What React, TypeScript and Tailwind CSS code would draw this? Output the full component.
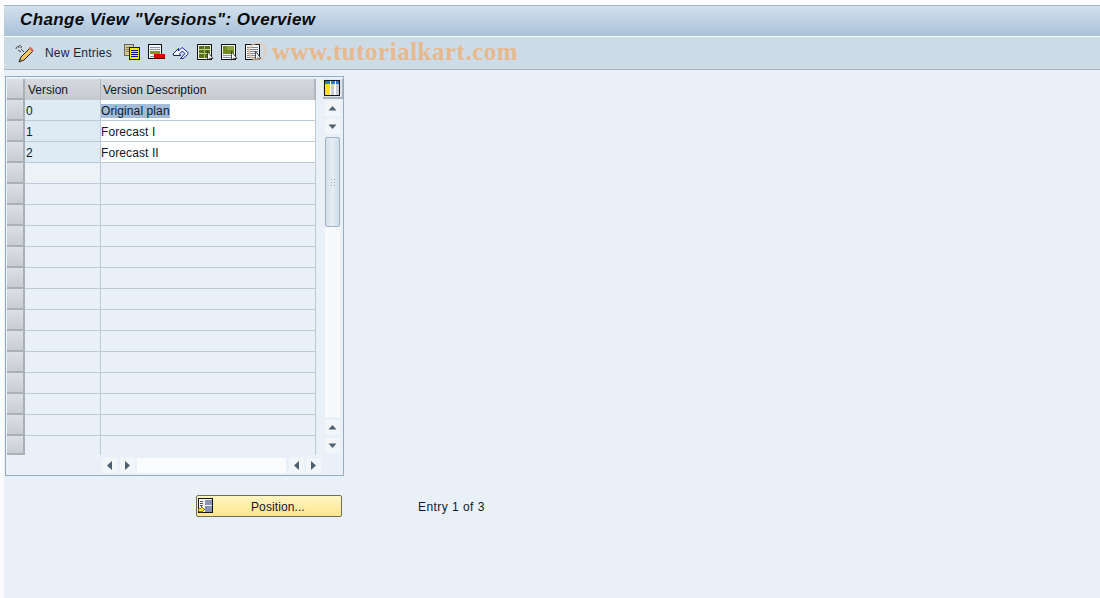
import React from 'react';

const FONT = "font-['Liberation_Sans',Arial,sans-serif]";
const ROW_COUNT = 17;
const ROWS = [
  { version: '0', text: 'Original plan' },
  { version: '1', text: 'Forecast I' },
  { version: '2', text: 'Forecast II' },
];

const Frame: React.FC<{ children: React.ReactNode }> = ({ children }) => (
  <svg width="16" height="17" viewBox="0 0 16 17" className="overflow-visible">
    <rect x="0.5" y="0.5" width="14" height="15" fill="#f4f6f8" stroke="#111" shapeRendering="crispEdges" />
    {children}
  </svg>
);

const PencilIcon = () => (
  <svg width="19" height="19" viewBox="0 0 19 19">
    <path d="M6 13l-2 5 5-2L18 7l-3-3z" fill="#f6c75a" stroke="#222" strokeWidth="1" strokeLinejoin="round" />
    <path d="M14.5 3.5l3.5 3.5" stroke="#e0605a" strokeWidth="2.4" />
    <path d="M4 17l1-2 1 1z" fill="#222" />
    <path d="M1 5c0-3 3-3 3-1M3 3c1-2 4-2 3 1M3 6l3 2M6 5l3 3" fill="none" stroke="#444" strokeWidth="1" />
  </svg>
);

const CopyIcon = () => (
  <svg width="16" height="16" viewBox="0 0 16 16" shapeRendering="crispEdges">
    <rect x="0.5" y="0.5" width="9" height="11" fill="#d8c98a" stroke="#666" />
    <path d="M2 3h6M2 5h6M2 7h6" stroke="#777" />
    <rect x="5.5" y="3.5" width="10" height="12" fill="#ffe600" stroke="#00108a" />
    <path d="M7 6h7M7 8h7M7 10h7M7 12h7" stroke="#00108a" />
  </svg>
);

const DeleteIcon = () => (
  <svg width="16" height="16" viewBox="0 0 16 16" className="overflow-visible" shapeRendering="crispEdges">
    <rect x="0.5" y="0.5" width="13" height="14" fill="#f4f6f8" stroke="#111" />
    <path d="M2 3h10M2 5h10" stroke="#8a93b5" />
    <rect x="2" y="7" width="10" height="3" fill="#7f9a2a" />
    <path d="M2 12h4" stroke="#8a93b5" />
    <rect x="6" y="10" width="11" height="4" fill="#e00000" />
    <path d="M6 14h11" stroke="#500" />
  </svg>
);

const UndoIcon = () => (
  <svg width="17" height="16" viewBox="0 0 17 16">
    <path
      d="M1 10l5.5-5.5v2.5L10 3.5l5.5 4.5c1 1 .5 2-.2 2.7L11 14.5H8.5l4.5-5-2.8-2.5-2.7 2.8 1 1.7H1.5z"
      fill="#fbfcff"
      stroke="#1020a0"
      strokeWidth="1"
      strokeLinejoin="round"
    />
  </svg>
);

const Cursor = () => <path d="M10.5 7.5v8.5l2-1.8 3.5.3z" fill="#fff" stroke="#111" strokeWidth="0.7" />;

const SelectAllIcon = () => (
  <Frame>
    <rect x="2" y="2" width="11" height="12" fill="#56701c" />
    <path d="M2 5.5h11M2 9.5h11" stroke="#c8d890" />
    <path d="M7.5 2v12" stroke="#a4ba5c" />
    <Cursor />
  </Frame>
);

const SelectBlockIcon = () => (
  <Frame>
    <rect x="2" y="2" width="11" height="8" fill="#6f8a1c" />
    <rect x="6" y="2" width="7" height="4" fill="#8fa63a" />
    <path d="M2 11.5h11M2 13.5h11" stroke="#8a93b5" />
    <Cursor />
  </Frame>
);

const DeselectIcon = () => (
  <Frame>
    <path d="M2 3.5h11M2 5.5h11M2 7.5h11M2 9.5h11M2 11.5h11M2 13.5h11" stroke="#7c8498" />
    <Cursor />
  </Frame>
);

const ConfigIcon = () => (
  <svg width="16" height="16" viewBox="0 0 16 16" shapeRendering="crispEdges">
    <rect x="0.5" y="0.5" width="15" height="15" fill="#fff" stroke="#111" />
    <rect x="1" y="1" width="14" height="3" fill="#2a78c8" />
    <path d="M6 1v3M11 1v3" stroke="#fff" />
    <rect x="1" y="4" width="5" height="11" fill="#ffe600" />
    <rect x="7" y="4" width="3" height="11" fill="#c8ccd4" />
    <rect x="12" y="4" width="3" height="11" fill="#c8ccd4" />
  </svg>
);

const PositionIcon = () => (
  <svg width="16" height="16" viewBox="0 0 16 16" shapeRendering="crispEdges">
    <rect x="0.5" y="0.5" width="14" height="14" fill="#f4f6f8" stroke="#111" />
    <rect x="7" y="2" width="7" height="5" fill="#8a93b5" />
    <rect x="7" y="8" width="7" height="6" fill="#8a93b5" />
    <path d="M2 3h3M2 5h3M2 7h3" stroke="#555" />
    <path d="M0 10h3V8l4 3.5L3 15v-2H0z" fill="#ffe600" stroke="#333" strokeWidth="0.6" />
  </svg>
);

const ScrollBtn: React.FC<{ dir: 'up' | 'down' | 'left' | 'right' }> = ({ dir }) => {
  const points = {
    up: '3.5,9.5 11.5,9.5 7.5,5',
    down: '3.5,5.5 11.5,5.5 7.5,10',
    left: '10,3 10,12 5,7.5',
    right: '5,3 5,12 10,7.5',
  }[dir];
  return (
    <div className="w-[15px] h-[15px] bg-[#f3f6f9] shrink-0">
      <svg width="15" height="15" viewBox="0 0 15 15">
        <polygon points={points} fill="#4c5f6e" />
      </svg>
    </div>
  );
};

const RowHandle: React.FC<{ last?: boolean }> = ({ last }) => (
  <div
    className={`w-[18px] shrink-0 border-r-2 border-b-2 border-[#aab0b8] bg-gradient-to-b from-[#dcdfe3] to-[#c9ccd1] ${
      last ? 'h-[19px]' : 'h-[21px]'
    }`}
  />
);

export default function App() {
  const rows = Array.from({ length: ROW_COUNT }, (_, i) => ROWS[i]);

  return (
    <div className={`${FONT} w-[1100px] h-[598px] overflow-hidden bg-[#fbfcfd] flex flex-col pl-[4px] pt-[5px] text-[12px] text-[#0c1a2b]`}>
      {/* Title */}
      <div className="h-[31px] shrink-0 bg-gradient-to-b from-[#d3e0ec] to-[#a9c1d9] border-t border-[#9db4c9] flex items-center pl-[16px] pb-[2px]">
        <h1 className="text-[17px] font-bold italic text-[#0a0a0a] tracking-[0.38px]">Change View "Versions": Overview</h1>
      </div>

      {/* Toolbar */}
      <div className="h-[33px] shrink-0 mt-[1px] bg-[#cddbe7] border-b border-[#a4b5c6] flex items-center pl-[11px] relative">
        <PencilIcon />
        <span className="ml-[11px] text-[12px] text-[#17263c] tracking-[0.2px]">New Entries</span>
        <div className="ml-[12px] mb-[2px] flex items-center gap-[8px]">
          <CopyIcon />
          <DeleteIcon />
          <UndoIcon />
          <SelectAllIcon />
          <SelectBlockIcon />
          <DeselectIcon />
        </div>
        <div className="absolute left-[244px] top-[5px] w-[19px] h-[19px] rounded-full border-2 border-[#e8c8a8] opacity-70" />
        <span className="absolute left-[268px] top-[-4px] font-['Liberation_Serif',serif] font-bold text-[25px] text-[#e8b98c] tracking-[0.5px]">
          www.tutorialkart.com
        </span>
      </div>

      {/* Content */}
      <div className="flex-1 bg-[#e9f0f7] pt-[6px] pl-[1px]">
        <div className="w-[339px] h-[400px] border border-[#95adc3] pt-[2px] pl-[1px] flex">
          <div className="w-[309px] shrink-0">
            {/* Table header */}
            <div className="flex h-[21px]">
              <RowHandle />
              <div className="w-[76px] bg-gradient-to-b from-[#d6d9dd] to-[#c6c9ce] border-r border-[#aeb6c0] pl-[3px] leading-[22px]">Version</div>
              <div className="flex-1 bg-gradient-to-b from-[#d6d9dd] to-[#c6c9ce] border-r-2 border-[#aeb6c0] pl-[2px] leading-[22px]">Version Description</div>
            </div>
            {rows.map((row, i) => {
              const last = i === ROW_COUNT - 1;
              return (
                <div key={i} className={`flex ${last ? 'h-[19px]' : 'h-[21px]'}`}>
                  <RowHandle last={last} />
                  <div className={`w-[76px] border-r border-[#bcc9d6] ${last ? '' : 'border-b border-b-[#bcc9d6]'} pl-[1px] leading-[22px] ${row ? 'bg-[#deebf5]' : i === 3 ? 'bg-[#edf2f7]' : ''}`}>
                    {row?.version}
                  </div>
                  <div className={`flex-1 border-r border-[#bcc9d6] ${last ? '' : 'border-b border-b-[#bcc9d6]'} leading-[22px] tracking-[0.1px] overflow-hidden ${row ? 'bg-white' : ''}`}>
                    {row && <span className={i === 0 ? 'bg-[#a3bbd6]' : ''}>{row.text}</span>}
                  </div>
                </div>
              );
            })}
            {/* Horizontal scrollbar */}
            <div className="flex items-center mt-[3px] ml-[95px] w-[230px]">
              <ScrollBtn dir="left" />
              <div className="w-[3px] shrink-0" />
              <ScrollBtn dir="right" />
              <div className="w-[149px] h-[15px] ml-[2px] bg-[#fafbfc] shrink-0" />
              <div className="w-[3px] shrink-0" />
              <ScrollBtn dir="left" />
              <div className="w-[2px] shrink-0" />
              <ScrollBtn dir="right" />
            </div>
          </div>

          {/* Vertical scrollbar */}
          <div className="w-[27px] ml-[2px] flex flex-col items-center">
            <div className="w-[20px] h-[20px] border-b-2 border-r border-[#aab4bf] bg-[#dfe5ea] flex items-center justify-center ml-[4px]">
              <ConfigIcon />
            </div>
            <div className="flex flex-col items-center gap-[3px] mt-[2px] ml-[4px]">
              <ScrollBtn dir="up" />
              <ScrollBtn dir="down" />
              <div className="w-[15px] h-[90px] border border-[#a5b3c0] rounded-[2px] bg-gradient-to-r from-[#d3e0eb] via-[#e6eef5] to-[#cfdce8] flex items-center justify-center">
                <div className="w-[6px] h-[9px] bg-[radial-gradient(#9aa9b6_1px,transparent_1px)] bg-[length:3px_3px]" />
              </div>
              <div className="w-[15px] h-[190px] -mt-[3px] bg-[#f7f9fb]" />
              <ScrollBtn dir="up" />
              <ScrollBtn dir="down" />
            </div>
          </div>
        </div>

        {/* Position button and entry count */}
        <div className="flex items-center mt-[19px]">
          <button className="ml-[191px] w-[146px] h-[22px] rounded-[2px] border border-[#6e6e60] bg-gradient-to-b from-[#fff6c4] to-[#ffe68c] flex items-center relative text-[12px] text-[#151530]">
            <span className="ml-[1px] flex"><PositionIcon /></span>
            <span className="absolute left-[54px] top-[2px] tracking-[0.1px]">Position...</span>
          </button>
          <span className="ml-[76px] pt-[2px] tracking-[0.45px]">Entry 1 of 3</span>
        </div>
      </div>
    </div>
  );
}
